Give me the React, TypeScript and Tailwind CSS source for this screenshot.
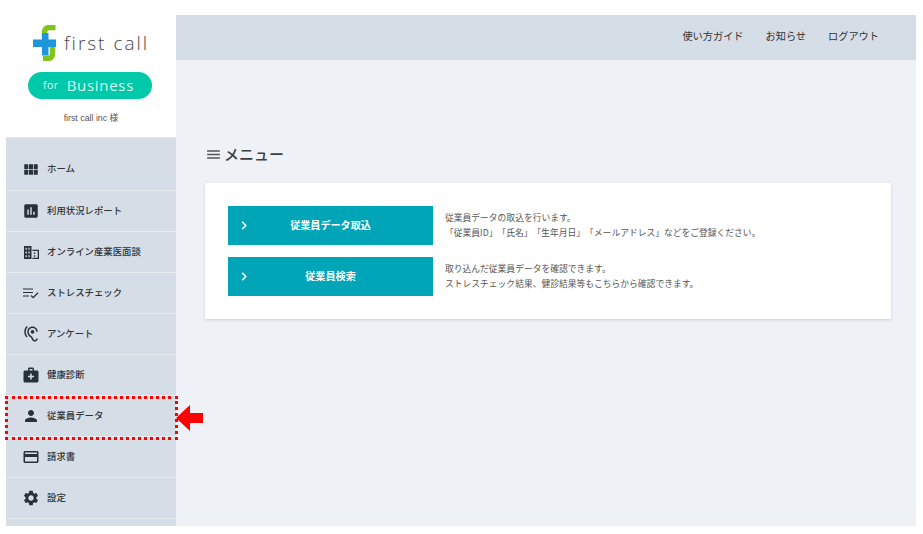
import React from "react";
import { MdViewModule, MdAssessment, MdHearing, MdMedicalServices, MdPerson, MdCreditCard, MdSettings, MdMenu } from "react-icons/md";

const font = { fontFamily: '"Noto Sans CJK JP", "Liberation Sans", sans-serif' };

const Building = () => (
  <svg viewBox="0 0 16 16" className="w-[15px] h-[15px]" fill="#263238">
    <path d="M0 1h8v14H0z M1.6 3v2h1.4V3z M4.6 3v2H6V3z M1.6 7v2h1.4V7z M4.6 7v2H6V7z M1.6 11v2h1.4v-2z M4.6 11v2H6v-2z" fillRule="evenodd" />
    <path d="M9 5h7v10H9v-1.4h5.6V6.4H9z M10.5 8h1.5v1.5h-1.5z M10.5 11h1.5v1.5h-1.5z" />
  </svg>
);

const ListCheck = () => (
  <svg viewBox="0 0 16 12" className="w-[16px] h-[12px]" fill="none" stroke="#263238" strokeWidth="1.2">
    <path d="M0 2h10M0 5.5h10M0 9h6" />
    <path d="M8 8.5l2.2 2.2L15 5.8" strokeWidth="1.3" />
  </svg>
);

const Chevron = () => (
  <svg viewBox="0 0 6 10" className="absolute left-[13px] top-[15px] w-[6px] h-[9px]" fill="none" stroke="#ffffff" strokeWidth="1.7">
    <path d="M1 1l4 4-4 4" />
  </svg>
);

const items: { label: string; icon: React.ReactNode }[] = [
  { label: "ホーム", icon: <MdViewModule size={19} /> },
  { label: "利用状況レポート", icon: <MdAssessment size={18} /> },
  { label: "オンライン産業医面談", icon: <Building /> },
  { label: "ストレスチェック", icon: <ListCheck /> },
  { label: "アンケート", icon: <MdHearing size={18} /> },
  { label: "健康診断", icon: <MdMedicalServices size={18} /> },
  { label: "従業員データ", icon: <MdPerson size={18} /> },
  { label: "請求書", icon: <MdCreditCard size={18} /> },
  { label: "設定", icon: <MdSettings size={18} /> },
];

const Logo = () => (
  <svg viewBox="0 0 23 36" className="w-[23px] h-[36px]">
    <path d="M11.500 16V7a4.500 4.500 0 0 1 4.500-4.500H22.500" fill="none" stroke="#82c41e" strokeWidth="5.500" />
    <path d="M19.500 20v9a4.500 4.500 0 0 1-4.500 4.500H10" fill="none" stroke="#82c41e" strokeWidth="5.500" />
    <path d="M9 8h6.500v6.500H23V22h-7.500v8.500H9V22H0v-7.500h9z" fill="#1f96dc" />
  </svg>
);

const rows = [
  {
    title: "従業員データ取込",
    lines: ["従業員データの取込を行います。", "「従業員ID」「氏名」「生年月日」「メールアドレス」などをご登録ください。"],
  },
  {
    title: "従業員検索",
    lines: ["取り込んだ従業員データを確認できます。", "ストレスチェック結果、健診結果等もこちらから確認できます。"],
  },
];

export default function App() {
  return (
    <div className="w-[923px] h-[534px] bg-white pt-[15px] pl-[6px] relative overflow-hidden" style={font}>
      <div className="flex w-[910px] h-[511px]">
        <aside className="w-[170px] shrink-0 flex flex-col">
          <div className="h-[123px] bg-white flex flex-col items-center border-b border-[#e3e8ee]">
            <div className="flex items-center mt-[10px] h-[36px] gap-[8px]">
              <Logo />
              <span className="text-[19px] tracking-[2px] text-[#4a4543] font-light leading-none" style={{ fontFamily: '"Open Sans", sans-serif' }}>first call</span>
            </div>
            <div className="mt-[11px] -ml-[2px] w-[124px] h-[27px] rounded-full bg-[#00c9a9] flex items-center justify-center gap-[8px] pr-[3px] text-[#d9fbf4]" style={{ fontFamily: '"Open Sans", sans-serif' }}>
              <span className="text-[10.500px] tracking-[0.5px]">for</span>
              <span className="text-[15px] tracking-[0.7px]">Business</span>
            </div>
            <div className="mt-[12px] text-[8.800px] leading-[14px] text-[#555]" style={{ fontFamily: '"Liberation Sans", "Noto Sans CJK JP", sans-serif' }}>first call inc 様</div>
          </div>
          <nav className="flex-1 bg-[#d5dde6] flex flex-col overflow-hidden">
            {items.map((it) => (
              <div key={it.label} className="h-[41px] shrink-0 first:h-[53px] first:pt-[10px] flex items-center border-b border-[#e6ebf0] pl-[16px] text-[#2f3438]">
                <span className="w-[18px] flex justify-center text-[#263238]">{it.icon}</span>
                <span className="ml-[7px] text-[9.400px] font-medium leading-none">{it.label}</span>
              </div>
            ))}
          </nav>
        </aside>
        <div className="flex-1 flex flex-col bg-[#eef2f6]">
          <header className="h-[45px] bg-[#d5dde6] flex items-center justify-end pr-[37px] pb-[3px] gap-[22px] text-[10.200px] text-[#333]">
            <span>使い方ガイド</span>
            <span>お知らせ</span>
            <span>ログアウト</span>
          </header>
          <main className="pl-[29px] pr-[25px]">
            <div className="mt-[81px] h-[24px] flex items-center gap-[2px] text-[#3a3f44]">
              <MdMenu size={17} className="text-[#555] mt-[2px]" />
              <span className="text-[15px] font-medium leading-none">メニュー</span>
            </div>
            <section className="mt-[18px] h-[136px] bg-white shadow-[0_1px_3px_rgba(0,0,0,0.15)] pt-[23px] pl-[23px] flex flex-col gap-[12px] [text-spacing-trim:space-all]">
              {rows.map((r) => (
                <div key={r.title} className="flex items-center">
                  <div className="w-[205px] h-[39px] bg-[#00a5b8] relative flex items-center justify-center pb-[2px] text-white text-[10.100px] font-bold">
                    <Chevron />
                    {r.title}
                  </div>
                  <div className="ml-[12px] -mt-px text-[8.780px] leading-[15.500px] text-[#555]">
                    {r.lines.map((l) => (
                      <div key={l}>{l}</div>
                    ))}
                  </div>
                </div>
              ))}
            </section>
          </main>
        </div>
      </div>
      <div className="absolute left-[5px] top-[396px] w-[173px] h-[44px] border-[3px] border-dotted border-[#ff0000]" />
      <svg viewBox="0 0 27 26" className="absolute left-[176px] top-[405px] w-[27px] h-[26px]">
        <path d="M0 13 14 0v8h13v10H14v8z" fill="#ff0000" />
      </svg>
    </div>
  );
}
